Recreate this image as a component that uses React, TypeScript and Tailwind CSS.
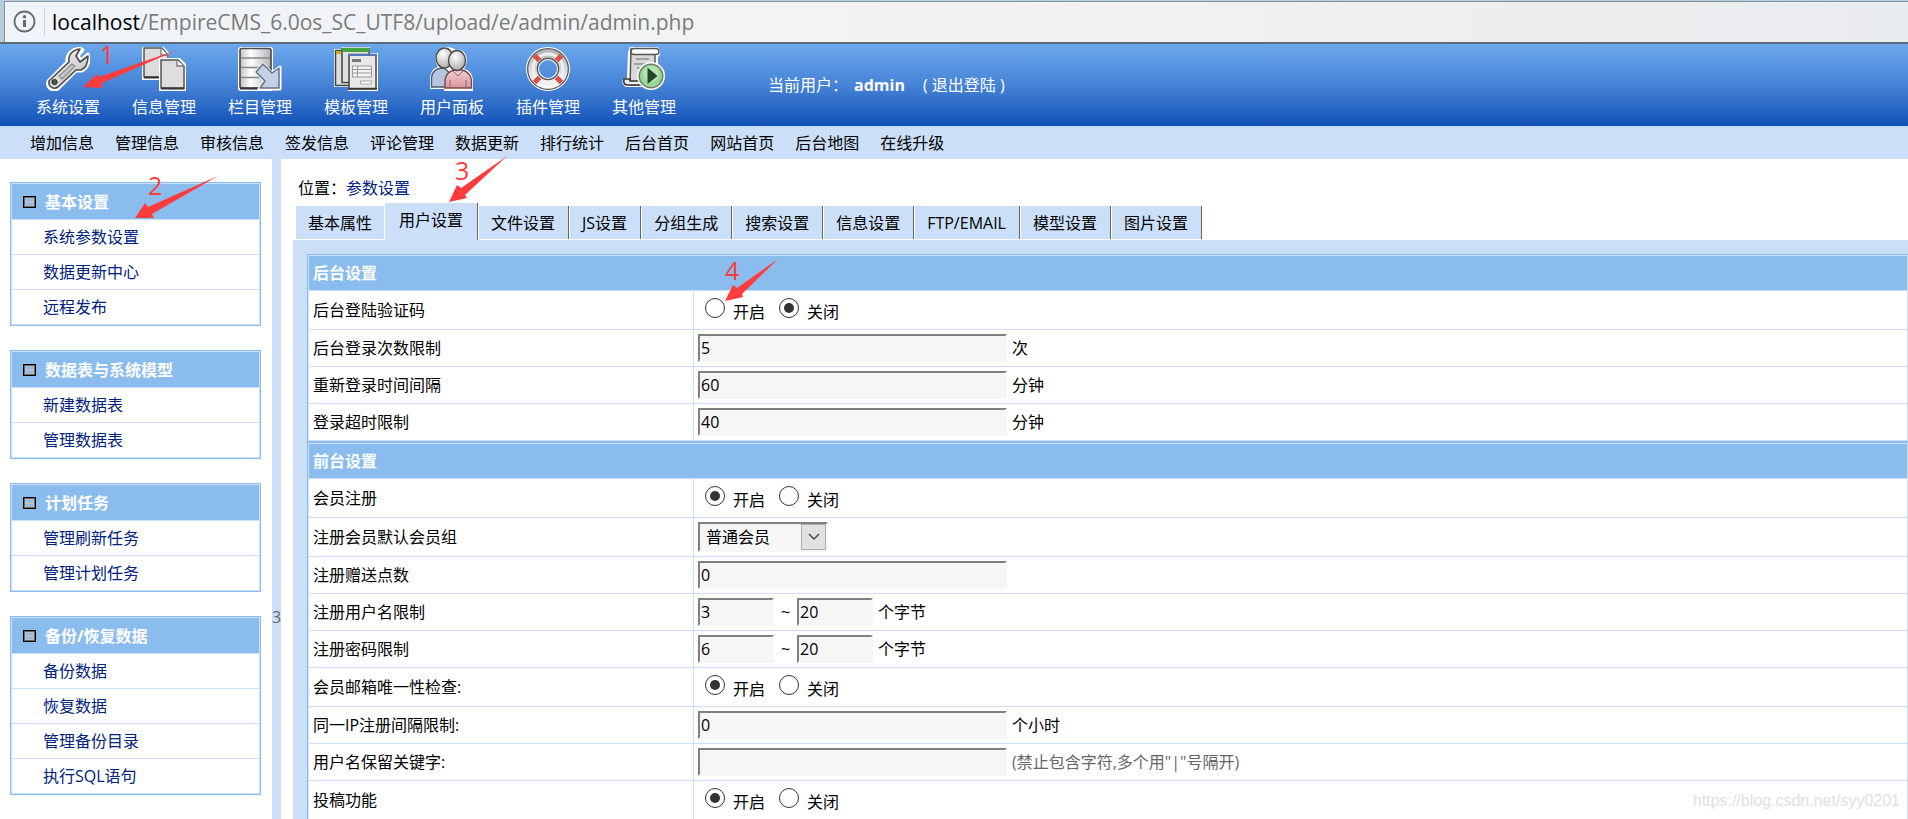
import { useState } from "react";
import type { ReactNode } from "react";

function WrenchIcon() {
  return (
    <svg viewBox="0 0 44 44" className="size-11" aria-hidden="true">
      <defs>
        <linearGradient id="steel" x1="0" y1="0" x2="1" y2="1">
          <stop offset="0" stopColor="#ffffff" />
          <stop offset="1" stopColor="#b5b5b5" />
        </linearGradient>
      </defs>
      <path
        d="M2 34 L21 15 C20 8 25 2 34 1 L37 3 L32 9 L35 13 L42 7 C44 14 42 21 36 24 L30 24 L12 42 C7 45 0 41 2 34 Z"
        fill="#fff"
        stroke="#fff"
        strokeWidth="3"
        strokeLinejoin="round"
      />
      <path
        d="M3 34 L23 15 C22 8 26 3 34 2 L30 9 L34 15 L42 9 C42 15 40 21 35 23 L30 23 L12 40 C8 43 2 40 3 34 Z"
        fill="url(#steel)"
        stroke="#4a4a4a"
        strokeWidth="1.6"
        strokeLinejoin="round"
      />
      <path d="M13 29 L26 17 L29 19 L16 32 Z" fill="#c9c9c9" stroke="#8c8c8c" strokeWidth="1.2" strokeLinejoin="round" />
      <circle cx="8.500" cy="35" r="2.600" fill="#555" stroke="#222" />
    </svg>
  );
}

function PagesIcon() {
  return (
    <svg viewBox="0 0 44 44" className="size-11" aria-hidden="true">
      <path d="M0 0 H22 L27 6 V33 H0 Z" fill="#fff" />
      <path d="M2 1 H20 L26 8 V30 H2 Z" fill="#dcdcdc" stroke="#555" strokeWidth="1.500" />
      <path d="M19 1 V8 H26" fill="#f8f8f8" stroke="#777" strokeWidth="1.300" />
      <path d="M2 30.500 H18" stroke="#333" strokeWidth="2" />
      <path d="M17 11 H38 L44 17 V44 H17 Z" fill="#fff" />
      <path d="M19 13 H36 L42 19 V41 H19 Z" fill="#dedede" stroke="#555" strokeWidth="1.500" />
      <path d="M35 13 V19 H42" fill="#f8f8f8" stroke="#777" strokeWidth="1.300" />
      <path d="M19 41.500 H42.500" stroke="#333" strokeWidth="2" />
    </svg>
  );
}

function DatabaseIcon() {
  return (
    <svg viewBox="0 0 44 44" className="size-11" aria-hidden="true">
      <defs>
        <linearGradient id="drum">
          <stop offset="0" stopColor="#c4c4c4" />
          <stop offset="0.350" stopColor="#ffffff" />
          <stop offset="1" stopColor="#b3b3b3" />
        </linearGradient>
      </defs>
      <rect x="0" y="0" width="35" height="44" rx="3" fill="#fff" />
      <rect x="2" y="1.500" width="31" height="39.500" rx="2" fill="url(#drum)" stroke="#4d4d4d" strokeWidth="1.700" />
      <path d="M3 11 H32 M3 20.500 H32 M3 30.500 H32" stroke="#888" strokeWidth="1.300" />
      <path d="M2 41.500 H33" stroke="#333" strokeWidth="2" />
      <path
        d="M25 17 L34 26 L42 20 V42 H21 L27 34 L18 25 Z"
        fill="#fff"
        stroke="#fff"
        strokeWidth="3"
        strokeLinejoin="round"
      />
      <path
        d="M25 17 L34 26 L41 21 V41 H22 L27 34 L18 25 Z"
        fill="#c3d0e6"
        stroke="#66728a"
        strokeWidth="1.500"
        strokeLinejoin="round"
      />
    </svg>
  );
}

function TemplateIcon() {
  return (
    <svg viewBox="0 0 44 44" className="size-11" aria-hidden="true">
      <path d="M0 2 H7 V0 H36 V6 H44 V44 H14 V40 H0 Z" fill="#fff" />
      <rect x="1.500" y="3.500" width="20" height="35" fill="#ddd" stroke="#444" strokeWidth="1.500" />
      <rect x="2" y="4" width="5" height="3" fill="#c9a92b" />
      <rect x="8" y="1.500" width="27" height="34" fill="#e2e2e2" stroke="#444" strokeWidth="1.500" />
      <rect x="8" y="1" width="27" height="4" fill="#43a53a" />
      <rect x="15" y="7.500" width="27" height="34" fill="#e8e8e8" stroke="#444" strokeWidth="1.500" />
      <rect x="15" y="7" width="27" height="2" fill="#5878bd" />
      <rect x="18" y="12" width="9" height="3" fill="#777" />
      <rect x="18.500" y="19" width="19" height="11" fill="#f4f4f4" stroke="#999" />
      <path d="M18 22.500 H38 M18 26 H38 M23.500 19 V30" stroke="#999" />
      <rect x="26.500" y="34" width="11" height="3" fill="#fff" stroke="#aaa" />
      <path d="M14 42 H43" stroke="#333" strokeWidth="1.500" />
    </svg>
  );
}

function UsersIcon() {
  return (
    <svg viewBox="0 0 44 44" className="size-11" aria-hidden="true">
      <defs>
        <radialGradient id="head" cx="0.400" cy="0.300" r="0.800">
          <stop offset="0" stopColor="#ffffff" />
          <stop offset="1" stopColor="#a3a3a3" />
        </radialGradient>
        <linearGradient id="shirt" x1="0" y1="0" x2="0" y2="1">
          <stop offset="0" stopColor="#f0cdd0" />
          <stop offset="1" stopColor="#d9959b" />
        </linearGradient>
      </defs>
      <path d="M0 42 V31 C1 24 4 21 8 20 C3 12 6 1 15 0 C20 0 24 1 26 3 C36 1 40 13 34 22 C40 23 43 28 43 35 V44 H14 V42 Z" fill="#fff" />
      <path d="M1.500 40 V31 C2 25 6 21 14 21 L22 28 V40 Z" fill="#b4c5df" stroke="#4f5a6c" strokeWidth="1.400" />
      <ellipse cx="14.500" cy="11" rx="8.500" ry="10" fill="url(#head)" stroke="#4a4a4a" strokeWidth="1.400" />
      <path d="M15 41 V33 C16 27 20 24 24 23 H32 C37 24 41 28 41.500 33 V41 Z" fill="url(#shirt)" stroke="#77494d" strokeWidth="1.400" />
      <path d="M23 24 L28 29 L33 24 M20 33 V40 M36 33 V40" fill="none" stroke="#9c6468" />
      <ellipse cx="27" cy="13.500" rx="8.500" ry="10" fill="url(#head)" stroke="#4a4a4a" strokeWidth="1.400" />
    </svg>
  );
}

function LifebuoyIcon() {
  return (
    <svg viewBox="0 0 44 44" className="size-11" aria-hidden="true">
      <defs>
        <linearGradient id="buoy" x1="0" y1="0" x2="0" y2="1">
          <stop offset="0" stopColor="#b9b9b9" />
          <stop offset="1" stopColor="#f6f6f6" />
        </linearGradient>
      </defs>
      <circle cx="22" cy="22" r="15.500" fill="none" stroke="#fff" strokeWidth="13" />
      <circle cx="22" cy="22" r="15.500" fill="none" stroke="#555" strokeWidth="11" />
      <circle cx="22" cy="22" r="15.500" fill="none" stroke="url(#buoy)" strokeWidth="8.500" />
      <circle cx="22" cy="22" r="15" fill="none" stroke="#f0f0f0" strokeWidth="3" />
      <g stroke="#db4f4b" strokeWidth="5">
        <path d="M8.500 8.500 L13.500 13.500 M35.500 8.500 L30.500 13.500 M8.500 35.500 L13.500 30.500 M35.500 35.500 L30.500 30.500" />
      </g>
    </svg>
  );
}

function ScriptIcon() {
  return (
    <svg viewBox="0 0 44 44" className="size-11" aria-hidden="true">
      <path d="M8 0 H35 C39 2 39 8 36 10 V40 H4 C-1 38 -1 31 5 31 L6 5 Z" fill="#fff" />
      <path d="M9 2 H33 V38 H8 Z" fill="#d9d9d9" stroke="#555" strokeWidth="1.500" />
      <rect x="9" y="1.500" width="28" height="6" rx="3" fill="#fafafa" stroke="#555" strokeWidth="1.400" />
      <path d="M14 12 H27 M12 17 H24 M15 21 H22" stroke="#8a8a8a" strokeWidth="1.500" />
      <path d="M8 32 H2 C1 37 3 38 6 38 H20 V34 H8 Z" fill="#eee" stroke="#333" strokeWidth="1.600" />
      <circle cx="29" cy="29" r="14" fill="#fff" />
      <circle cx="29" cy="29" r="12.500" fill="#74786f" />
      <circle cx="29" cy="29" r="11" fill="#9ad897" />
      <circle cx="29" cy="27" r="8" fill="#b4e6b0" />
      <path d="M25.500 20.500 L35.500 29 L25.500 37 Z" fill="#27452a" />
    </svg>
  );
}

const topMenu = [
  { name: "系统设置", icon: <WrenchIcon /> },
  { name: "信息管理", icon: <PagesIcon /> },
  { name: "栏目管理", icon: <DatabaseIcon /> },
  { name: "模板管理", icon: <TemplateIcon /> },
  { name: "用户面板", icon: <UsersIcon /> },
  { name: "插件管理", icon: <LifebuoyIcon /> },
  { name: "其他管理", icon: <ScriptIcon /> },
];

const quickLinks = [
  "增加信息",
  "管理信息",
  "审核信息",
  "签发信息",
  "评论管理",
  "数据更新",
  "排行统计",
  "后台首页",
  "网站首页",
  "后台地图",
  "在线升级",
];

const sideMenu = [
  { title: "基本设置", items: ["系统参数设置", "数据更新中心", "远程发布"] },
  { title: "数据表与系统模型", items: ["新建数据表", "管理数据表"] },
  { title: "计划任务", items: ["管理刷新任务", "管理计划任务"] },
  { title: "备份/恢复数据", items: ["备份数据", "恢复数据", "管理备份目录", "执行SQL语句"] },
];

const tabs = [
  "基本属性",
  "用户设置",
  "文件设置",
  "JS设置",
  "分组生成",
  "搜索设置",
  "信息设置",
  "FTP/EMAIL",
  "模型设置",
  "图片设置",
];

const arrows = [
  "83,87 97,74 99,77 177,50 102,83 102,88",
  "135,218 145,203 148,207 218,176 152,214 154,218",
  "449,202 457,185 461,188 507,156 465,195 467,198",
  "725,301 733,285 737,288 778,259 742,294 743,297",
];

const inputClass =
  "h-7 border-2 border-t-[#808080] border-l-[#808080] border-r-[#f6f6f6] border-b-[#f6f6f6] bg-[#f6f6f6] pl-px text-base leading-5 text-black outline-none";

function AddressBar() {
  return (
    <div className="flex h-11 shrink-0 border-b-2 border-[#5b6b7c] bg-[#b3cede]">
      <div className="mt-px ml-1 flex flex-1 items-center border-t border-l border-[#8a949a] bg-linear-to-r from-[#eff5fa] via-[#f3f2f0] to-[#e9ecef] pl-2">
        <svg viewBox="0 0 24 24" className="size-6" aria-hidden="true">
          <circle cx="11.500" cy="11.500" r="10" fill="none" stroke="#6b6b6b" strokeWidth="1.800" />
          <path d="M11.500 10 V17" stroke="#6b6b6b" strokeWidth="3" />
          <circle cx="11.500" cy="6.800" r="1.700" fill="#6b6b6b" />
        </svg>
        <div className="ml-[7px] h-7 w-px bg-[#cfd4d8]" />
        <p className="ml-[7px] text-[21px] leading-7 whitespace-nowrap text-[#7b7b7b]">
          <span className="text-black">localhost</span>
          /EmpireCMS_6.0os_SC_UTF8/upload/e/admin/admin.php
        </p>
      </div>
    </div>
  );
}

function TopBar() {
  return (
    <header className="flex h-[82px] shrink-0 bg-linear-to-b from-[#6ca8ec] via-[#4683d6] to-[#0f51b8] pl-5 text-white">
      <nav className="flex">
        {topMenu.map((item) => (
          <a key={item.name} href="#" className="flex w-24 flex-col items-center pt-[3px]">
            {item.icon}
            <span className="mt-1.5 leading-5">{item.name}</span>
          </a>
        ))}
      </nav>
      <p className="ml-[76px] flex items-center leading-5 whitespace-nowrap">
        当前用户：
        <b className="ml-1.5">admin</b>
        <a href="#" className="ml-[18px]">
          ( 退出登陆 )
        </a>
      </p>
    </header>
  );
}

function SideMenu() {
  return (
    <aside className="flex w-[272px] shrink-0 flex-col gap-6 bg-white pt-[23px] pr-[11px] pl-2.5">
      {sideMenu.map((group) => (
        <section
          key={group.title}
          className="flex shrink-0 flex-col gap-px border border-[#8bbcee] bg-[#cbe0f8] p-px"
        >
          <h2 className="flex h-[35px] items-center bg-[#8bbcee] pl-[11px] font-bold text-white">
            <svg viewBox="0 0 13 12" className="mr-[9px] h-3 w-[13px]" aria-hidden="true">
              <rect width="13" height="12" fill="#000" />
              <rect x="1" y="1" width="11" height="10" fill="#666" />
              <rect x="2" y="2" width="9" height="8" fill="#c0c0c0" />
              <path d="M3 4 H10 M3 8 H10" stroke="#8bbcee" strokeWidth="2" />
            </svg>
            {group.title}
          </h2>
          {group.items.map((item) => (
            <a
              key={item}
              href="#"
              className="flex h-[34px] items-center bg-white pl-[31px] text-[#00217e]"
            >
              {item}
            </a>
          ))}
        </section>
      ))}
    </aside>
  );
}

function Tabs({ active, onChange }: { active: string; onChange: (name: string) => void }) {
  return (
    <div className="flex h-[42px] shrink-0 items-end pl-[3px]">
      {tabs.map((name, i) => (
        <button
          key={name}
          type="button"
          onClick={() => onChange(name)}
          className={
            name === active
              ? "h-[37px] border-r border-[#666] bg-[#cbe0f8] pr-3.5 pb-1 pl-3.5"
              : i === 0
                ? "mr-px mb-px h-[33px] bg-[#cbe0f8] px-3"
                : "mb-px h-[33px] border-r border-l border-r-[#666] border-l-white bg-[#cbe0f8] pr-[13px] pl-3"
          }
        >
          {name}
        </button>
      ))}
    </div>
  );
}

function SettingsTable({ title, children }: { title: string; children: ReactNode }) {
  return (
    <table className="w-full table-fixed border-separate border-spacing-px border border-r-0 border-[#8bbcee] bg-[#cbe0f8]">
      <colgroup>
        <col className="w-96" />
        <col />
      </colgroup>
      <thead>
        <tr>
          <th colSpan={2} className="h-[34px] bg-[#8bbcee] p-0 pl-1 text-left font-bold text-white">
            {title}
          </th>
        </tr>
      </thead>
      <tbody>{children}</tbody>
    </table>
  );
}

function Row({ id, label, tall, children }: { id?: string; label: string; tall?: boolean; children: ReactNode }) {
  return (
    <tr className={tall ? "h-[38px]" : "h-9"}>
      <td className="bg-white p-0 pl-1">{id ? <label htmlFor={id}>{label}</label> : label}</td>
      <td className="bg-white p-0 pl-1">
        <div className="flex items-center">{children}</div>
      </td>
    </tr>
  );
}

function RadioRow({ name, label, on }: { name: string; label: string; on: boolean }) {
  const radioClass =
    "grid size-5 appearance-none place-content-center rounded-full border border-[#333] bg-white checked:before:size-2.5 checked:before:rounded-full checked:before:bg-[#333]";

  return (
    <Row label={label} tall>
      <div role="radiogroup" aria-label={label} className="flex gap-3.5 pl-[7px]">
        <label className="flex gap-2">
          <input type="radio" name={name} defaultChecked={on} className={radioClass} />
          <span className="pt-1">开启</span>
        </label>
        <label className="flex gap-2">
          <input type="radio" name={name} defaultChecked={!on} className={radioClass} />
          <span className="pt-1">关闭</span>
        </label>
      </div>
    </Row>
  );
}

function TextRow({ id, label, value, unit }: { id: string; label: string; value: string; unit?: ReactNode }) {
  return (
    <Row id={id} label={label}>
      <input id={id} type="text" defaultValue={value} className={`${inputClass} w-[309px]`} />
      <span className="ml-[5px]">{unit}</span>
    </Row>
  );
}

function RangeRow({ id, label, min, max }: { id: string; label: string; min: string; max: string }) {
  return (
    <Row id={id} label={label}>
      <input id={id} type="text" defaultValue={min} className={`${inputClass} w-[76px]`} />
      <span className="w-[23px] text-center">~</span>
      <input type="text" aria-label={`${label} 最大`} defaultValue={max} className={`${inputClass} w-[76px]`} />
      <span className="ml-[5px]">个字节</span>
    </Row>
  );
}

export default function App() {
  const [tab, setTab] = useState("用户设置");

  return (
    <div
      lang="zh-CN"
      className="relative flex h-screen flex-col overflow-hidden bg-[#cbe0f8] font-['Open_Sans','Noto_Sans_CJK_SC',sans-serif] text-base leading-5 text-black"
    >
      <AddressBar />
      <TopBar />

      {/* 快捷菜单 */}
      <nav className="flex h-[33px] shrink-0 items-center gap-[21px] pl-[30px] whitespace-nowrap">
        {quickLinks.map((name) => (
          <a key={name} href="#">
            {name}
          </a>
        ))}
      </nav>

      <div className="flex min-h-0 flex-1">
        <SideMenu />

        {/* 收起左侧菜单 */}
        <div className="flex w-[9px] shrink-0 flex-col items-center">
          <div className="grow-[7]" />
          <button type="button" className="text-base leading-5 text-[#666]">
            3
          </button>
          <div className="grow-[3]" />
        </div>

        <main className="flex min-w-0 flex-1 flex-col bg-white pt-[19px] pl-3">
          <p className="shrink-0 pl-[5px]">
            位置：
            <a href="#" className="text-[#00217e]">
              参数设置
            </a>
          </p>
          <Tabs active={tab} onChange={setTab} />

          <form className="flex-1 bg-[#cbe0f8] pt-3.5 pl-3.5">
            <SettingsTable title="后台设置">
              <RadioRow name="loginkey" label="后台登陆验证码" on={false} />
              <TextRow id="loginnum" label="后台登录次数限制" value="5" unit="次" />
              <TextRow id="logintime" label="重新登录时间间隔" value="60" unit="分钟" />
              <TextRow id="exittime" label="登录超时限制" value="40" unit="分钟" />
            </SettingsTable>

            <SettingsTable title="前台设置">
              <RadioRow name="register" label="会员注册" on />
              <Row id="groupid" label="注册会员默认会员组" tall>
                <div className="relative">
                  <select
                    id="groupid"
                    className="h-[30px] w-[130px] appearance-none border-2 border-t-[#808080] border-r-[#f6f6f6] border-b-[#f6f6f6] border-l-[#808080] bg-[#f6f6f6] pl-1.5 text-base leading-5 text-black outline-none"
                  >
                    <option>普通会员</option>
                  </select>
                  <span className="pointer-events-none absolute top-0.5 right-0.5 flex h-[26px] w-[25px] items-center justify-center border border-[#adadad] bg-[#e1e1e1]">
                    <svg viewBox="0 0 12 8" className="h-2 w-3" aria-hidden="true">
                      <path d="M1 1 L6 6 L11 1" fill="none" stroke="#444" strokeWidth="1.400" />
                    </svg>
                  </span>
                </div>
              </Row>
              <TextRow id="registerfen" label="注册赠送点数" value="0" />
              <RangeRow id="minuserlen" label="注册用户名限制" min="3" max="20" />
              <RangeRow id="minpasslen" label="注册密码限制" min="6" max="20" />
              <RadioRow name="emailonly" label="会员邮箱唯一性检查:" on />
              <TextRow id="regretime" label="同一IP注册间隔限制:" value="0" unit="个小时" />
              <TextRow
                id="regclosewords"
                label="用户名保留关键字:"
                value=""
                unit={<span className="text-[#666]">(禁止包含字符,多个用"|"号隔开)</span>}
              />
              <RadioRow name="addnews" label="投稿功能" on />
            </SettingsTable>
          </form>
        </main>
      </div>

      {/* 操作步骤标注 */}
      <svg className="pointer-events-none absolute top-0 left-0 h-80 w-[800px]" aria-hidden="true">
        {arrows.map((points) => (
          <polygon key={points} points={points} fill="#ff3b3b" />
        ))}
      </svg>
      <span className="absolute top-[40px] left-[100px] text-[25px] leading-7 text-[#ff3b3b]">1</span>
      <span className="absolute top-[171px] left-[148px] text-[25px] leading-7 text-[#ff3b3b]">2</span>
      <span className="absolute top-[156px] left-[455px] text-[25px] leading-7 text-[#ff3b3b]">3</span>
      <span className="absolute top-[256px] left-[725px] text-[25px] leading-7 text-[#ff3b3b]">4</span>

      <p className="absolute right-2 bottom-2 font-['Liberation_Sans',sans-serif] text-base leading-5 text-[#e0e0e0]">
        https://blog.csdn.net/syy0201
      </p>
    </div>
  );
}
